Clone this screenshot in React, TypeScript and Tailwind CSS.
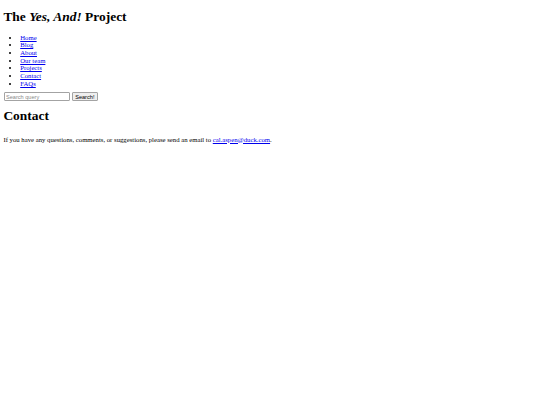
const NAV = ["Home", "Blog", "About", "Our team", "Projects", "Contact", "FAQs"];

export default function App() {
  return (
    <div className="min-h-[405px] bg-white p-[3.4px] font-['Liberation_Serif',serif] text-[6.72px] leading-[normal] text-black">
      <h1 className="my-[5.6px] text-[13.44px] font-bold leading-[normal]">
        The <em>Yes, And!</em> Project
      </h1>
      <ul className="mt-[8.7px] mb-[5px] list-disc pl-[16.8px]">
        {NAV.map((item) => (
          <li key={item} className="leading-[7.67px]">
            <a href="#" className="text-[#0000ee] underline">
              {item}
            </a>
          </li>
        ))}
      </ul>
      <form className="flex items-center gap-[1.7px]" onSubmit={(e) => e.preventDefault()}>
        <input
          type="text"
          placeholder="Search query"
          className="ml-[0.6px] h-[8.8px] w-[66px] rounded-[1px] border-[0.5px] border-[#a3a3a3] px-[1px] font-['Liberation_Sans',sans-serif] text-[5.6px] placeholder:text-[#8a8a8a]"
        />
        <button
          type="submit"
          className="h-[8.8px] rounded-[1px] border-[0.5px] border-[#a3a3a3] bg-[#efefef] px-[2.5px] font-['Liberation_Sans',sans-serif] text-[5.6px] text-black"
        >
          Search!
        </button>
      </form>
      <h2 className="mt-[6.6px] mb-[11.8px] text-[13.44px] font-bold leading-[normal]">Contact</h2>
      <p className="my-[6.72px]">
        If you have any questions, comments, or suggestions, please send an email to{" "}
        <a href="#" className="text-[#0000ee] underline">
          cal.aspen@duck.com
        </a>
        .
      </p>
    </div>
  );
}
